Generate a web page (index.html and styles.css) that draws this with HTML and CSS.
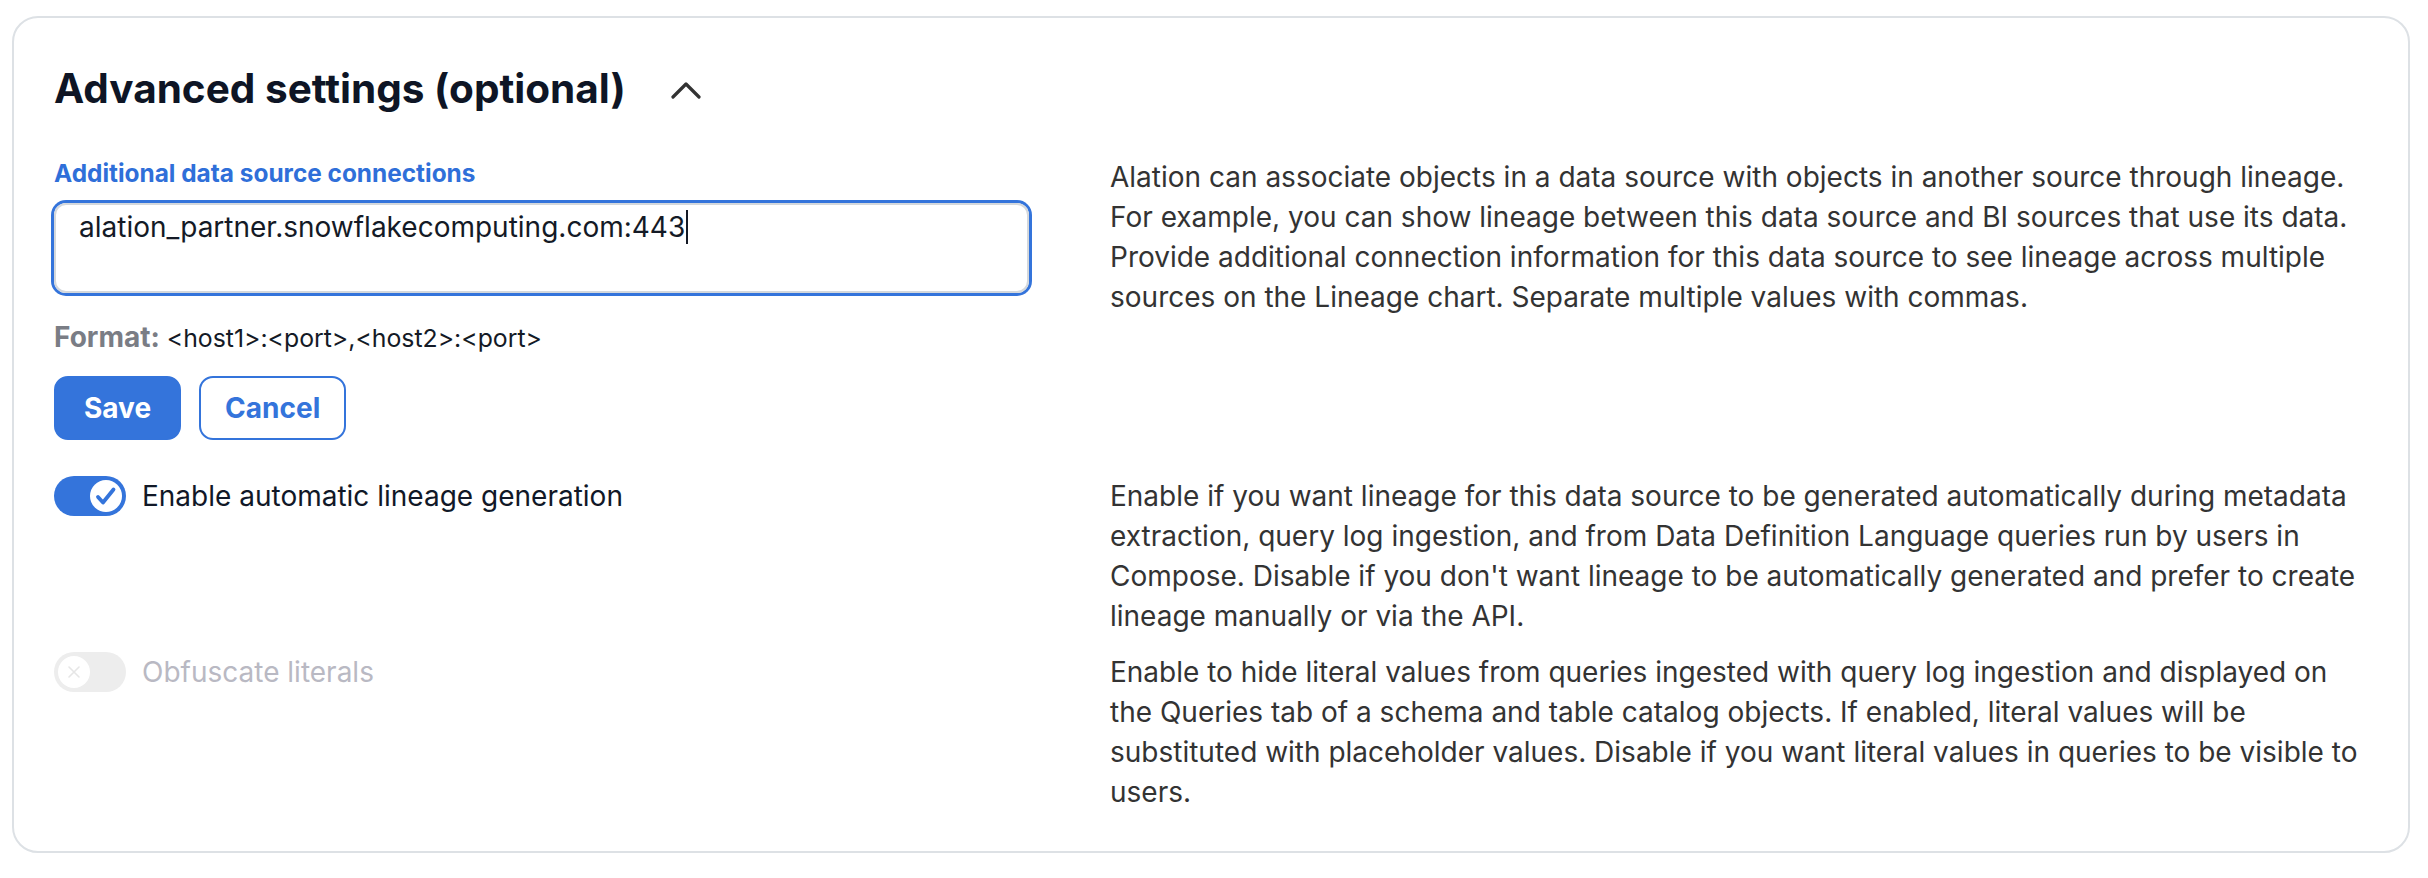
FILE: index.html
```html
<!DOCTYPE html>
<html lang="en">
<head>
  <meta charset="UTF-8">
  <title>Advanced settings</title>
  <link rel="stylesheet" href="styles.css">
</head>
<body>
  <div class="card">
    <div class="card-header">
      <h2>Advanced settings (optional)</h2>
      <svg class="chevron" width="30" height="18" viewBox="0 0 30 18">
        <path d="M2 16 L15 3 L28 16" fill="none" stroke="#333" stroke-width="3.2" stroke-linecap="round" stroke-linejoin="round"/>
      </svg>
    </div>

    <div class="settings">
      <!-- Additional connections -->
      <div class="setting-left">
        <label class="field-label">Additional data source connections</label>
        <div class="field"><span>alation_partner.snowflakecomputing.com:443</span><span class="caret"></span></div>
        <div class="format"><b>Format:</b> &lt;host1&gt;:&lt;port&gt;,&lt;host2&gt;:&lt;port&gt;</div>
        <div class="buttons">
          <button class="btn btn-primary">Save</button>
          <button class="btn btn-outline">Cancel</button>
        </div>
      </div>
      <p class="desc">Alation can associate objects in a data source with objects in another source through lineage. For example, you can show lineage between this data source and BI sources that use its data. Provide additional connection information for this data source to see lineage across multiple sources on the Lineage chart. Separate multiple values with commas.</p>

      <!-- Automatic lineage -->
      <div class="setting-left">
        <div class="toggle-row">
          <span class="toggle on">
            <span class="knob">
              <svg width="32" height="32" viewBox="0 0 32 32">
                <path d="M8 17 L13 22.5 L23.5 9.5" fill="none" stroke="#3474db" stroke-width="3.8" stroke-linecap="round" stroke-linejoin="round"/>
              </svg>
            </span>
          </span>
          <span class="toggle-label">Enable automatic lineage generation</span>
        </div>
      </div>
      <p class="desc">Enable if you want lineage for this data source to be generated automatically during metadata extraction, query log ingestion, and from Data Definition Language queries run by users in Compose. Disable if you don't want lineage to be automatically generated and prefer to create lineage manually or via the API.</p>

      <!-- Obfuscate literals -->
      <div class="setting-left">
        <div class="toggle-row">
          <span class="toggle off">
            <span class="knob">
              <svg width="32" height="32" viewBox="0 0 32 32">
                <path d="M11 11 L21 21 M21 11 L11 21" fill="none" stroke="#e6e6e6" stroke-width="1.6" stroke-linecap="round"/>
              </svg>
            </span>
          </span>
          <span class="toggle-label disabled">Obfuscate literals</span>
        </div>
      </div>
      <p class="desc">Enable to hide literal values from queries ingested with query log ingestion and displayed on the Queries tab of a schema and table catalog objects. If enabled, literal values will be substituted with placeholder values. Disable if you want literal values in queries to be visible to users.</p>
    </div>
  </div>
</body>
</html>
```

FILE: styles.css
```css
body {
  margin: 0;
  padding: 16px 18px 0 12px;
  background-color: #fff;
  font-family: Inter, "Noto Sans", sans-serif;
  color: #111827;
}

.card {
  border: 2px solid #dde1e5;
  border-radius: 26px;
  padding: 47px 40px 39px 40px;
}

.card-header {
  display: flex;
  align-items: center;
  height: 48px;
}

h2 {
  margin: 0;
  font-size: 40.5px;
  line-height: 48px;
  font-weight: 700;
  color: #0e1525;
}

.chevron {
  margin-left: 45px;
  margin-top: 2px;
}

.settings {
  display: grid;
  grid-template-columns: 975px 1fr;
  column-gap: 81px;
  row-gap: 16px;
  margin-top: 44px;
}

.desc {
  margin: 0;
  font-size: 28px;
  line-height: 40px;
  color: #333;
}

.field-label {
  display: block;
  font-size: 24.4px;
  line-height: 32px;
  font-weight: 700;
  color: #2f6fd9;
}

.field {
  margin-top: 14px;
  height: 90px;
  box-sizing: border-box;
  border: 2px solid #d4d8dc;
  border-radius: 12px;
  box-shadow: 0 0 0 3px #3474db;
  padding: 5px 23px;
  font-size: 28px;
  line-height: 34px;
  color: #141a26;
}

.caret {
  display: inline-block;
  width: 2px;
  height: 34px;
  background-color: #141a26;
  vertical-align: top;
  margin-left: 1px;
}

.format {
  margin-top: 28px;
  font-size: 24.8px;
  line-height: 32px;
  color: #141a26;
}

.format b {
  font-size: 28px;
  color: #7a7d85;
}

.buttons {
  display: flex;
  gap: 18px;
  margin-top: 22px;
  margin-bottom: 20px;
}

.btn {
  height: 64px;
  border-radius: 14px;
  font-family: Inter, "Noto Sans", sans-serif;
  font-size: 28px;
  font-weight: 700;
  padding: 0 28px;
  border: 2px solid #3474db;
}

.btn-primary {
  background-color: #3474db;
  color: #fff;
}

.btn-outline {
  background-color: #fff;
  color: #3474db;
  padding: 0 24px;
}

.toggle-row {
  display: flex;
  align-items: center;
  gap: 16px;
}

.toggle {
  display: flex;
  align-items: center;
  width: 72px;
  height: 40px;
  border-radius: 20px;
  padding: 4px;
  box-sizing: border-box;
}

.toggle.on {
  background-color: #3474db;
  justify-content: flex-end;
}

.toggle.off {
  background-color: #ededed;
  justify-content: flex-start;
}

.knob {
  width: 32px;
  height: 32px;
  border-radius: 50%;
  background-color: #fff;
}

.knob svg {
  display: block;
}

.toggle-label {
  font-size: 28px;
  line-height: 40px;
  color: #111827;
}

.toggle-label.disabled {
  color: #b9b9c3;
}
```
